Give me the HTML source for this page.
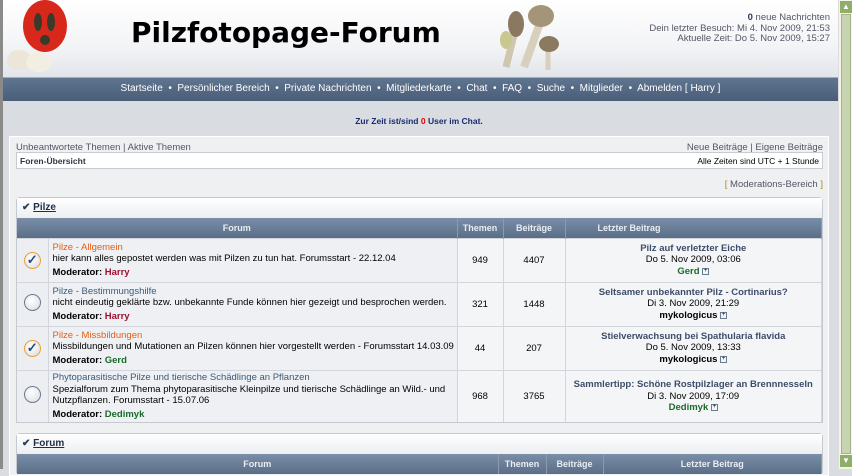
<!DOCTYPE html>
<html><head><meta charset="utf-8"><style>
*{box-sizing:border-box;margin:0;padding:0}
body{width:852px;height:469px;overflow:hidden;background:#d9dde2;font-family:"Liberation Sans",Arial,sans-serif;font-size:9.5px;color:#000;position:relative}
.lb{position:absolute;left:0;top:0;width:3px;height:469px;background:#8a8a88}
.sb{position:absolute;left:838px;top:0;width:14px;height:469px;background:#f4f2ea;border-left:1px solid #ddd}
.sb .th{position:absolute;left:2px;top:14px;width:10px;height:440px;background:#c7d4b0;border:1px solid #a5b38a}
.sb .a{position:absolute;left:1px;width:12px;height:12px;background:#8fae68;color:#fff;font-size:8px;text-align:center;line-height:12px}
.hdr{position:absolute;left:3px;top:0;width:835px;height:77px;background:linear-gradient(#fff,#f3f4f6 60%,#e2e5ea)}
.title{position:absolute;left:128px;top:16px;font-family:"DejaVu Sans",sans-serif;font-weight:bold;font-size:28px}
.hr{position:absolute;right:8px;top:13px;text-align:right;color:#556;font-size:9.5px;line-height:10.5px}
.nav{position:absolute;left:3px;top:77px;width:835px;height:24px;background:linear-gradient(#5f7590,#4a5e78);color:#fff;text-align:center;line-height:22px;font-size:10px;border-top:1px solid #aab}
.chat{position:absolute;left:0;width:838px;top:116px;text-align:center;font-weight:bold;color:#1a2a70;font-size:8.5px}
.box{position:absolute;left:9px;top:136px;width:820px;height:340px;background:#eef0f2;border:1px solid #fff}
.lnk{color:#556;font-size:9.5px}
.crumb{position:absolute;left:16px;top:152px;width:807px;height:17px;background:#fff;border:1px solid #c8ccd2;font-size:8.5px;line-height:16px;padding:0 3px}
.tb{position:absolute;left:16px;width:807px;border:1px solid #c5cad2;background:#f4f5f7;border-radius:4px 4px 0 0}
.tt{height:20px;line-height:20px;padding-left:5px;font-weight:bold;font-size:10px;background:linear-gradient(#fff,#eceef1)}
.tt u{color:#1c2e4a}
table{border-collapse:collapse;width:100%;table-layout:fixed}
th{height:20px;background:linear-gradient(#7b8ea8,#5a6e88);color:#e8edf3;font-size:9px;border-right:1px solid #8a9ab0}
td{border-top:1px solid #d2d6dc;border-right:1px solid #d2d6dc;font-size:9.5px;vertical-align:middle}
.c{text-align:center}
.ic{text-align:center;background:#eceef1}
.fn{padding-left:4px;line-height:11.5px;background:#eef0f3}
.or{color:#e85d10}.bl{color:#3a5a7a}
.mod{font-weight:bold;margin-top:2px}
.red{color:#a01030}.grn{color:#1a6a2a}
.last{line-height:11.5px;text-align:center;white-space:nowrap;font-size:9.5px}
.last b.t{color:#3d4d6a}
.circ{display:inline-block;width:17px;height:17px;border-radius:50%;border:1.5px solid #6b7a90;background:radial-gradient(circle at 40% 35%,#fff,#d8dce2)}
.circ.on{border-color:#f0a030;color:#2a4a80;font-size:13px;line-height:14px;font-weight:bold}
.pi{display:inline-block;width:7px;height:7px;border:1px solid #6a7a90;font-size:6px;line-height:5px;vertical-align:middle}
</style></head><body>
<div class="lb"></div>
<div class="hdr">
 <svg style="position:absolute;left:2px;top:0" width="80" height="75"><ellipse cx="40" cy="26" rx="22" ry="26" fill="#d8281c"/><ellipse cx="33" cy="22" rx="4" ry="9" fill="#3a3a2a"/><ellipse cx="46" cy="22" rx="4" ry="9" fill="#3a3a2a"/><ellipse cx="40" cy="40" rx="5" ry="5" fill="#3a3a2a"/><ellipse cx="14" cy="60" rx="12" ry="10" fill="#ece6d8"/><ellipse cx="34" cy="62" rx="13" ry="10" fill="#f2eee2"/></svg>
 <div class="title">Pilzfotopage-Forum</div>
 <svg style="position:absolute;left:483px;top:2px" width="75" height="72"><path d="M30 25 L20 65" stroke="#cfc6b0" stroke-width="7"/><path d="M55 18 L38 65" stroke="#d8d0bc" stroke-width="8"/><path d="M62 45 L62 68" stroke="#d8d0bc" stroke-width="5"/><ellipse cx="30" cy="22" rx="8" ry="13" fill="#8a7860"/><ellipse cx="55" cy="14" rx="13" ry="11" fill="#a49478"/><ellipse cx="63" cy="42" rx="10" ry="8" fill="#8a7a60"/><ellipse cx="20" cy="38" rx="6" ry="9" fill="#c8c890"/></svg>
 <div class="hr"><b style="color:#2a3a60">0</b> neue Nachrichten<br>Dein letzter Besuch: Mi 4. Nov 2009, 21:53<br>Aktuelle Zeit: Do 5. Nov 2009, 15:27</div>
</div>
<div class="nav">Startseite &nbsp;•&nbsp; Persönlicher Bereich &nbsp;•&nbsp; Private Nachrichten &nbsp;•&nbsp; Mitgliederkarte &nbsp;•&nbsp; Chat &nbsp;•&nbsp; FAQ &nbsp;•&nbsp; Suche &nbsp;•&nbsp; Mitglieder &nbsp;•&nbsp; Abmelden [ Harry ]</div>
<div class="chat">Zur Zeit ist/sind <span style="color:#e00">0</span> User im Chat.</div>
<div class="box"></div>
<div class="lnk" style="position:absolute;left:16px;top:142px">Unbeantwortete Themen | Aktive Themen</div>
<div class="lnk" style="position:absolute;right:29px;top:142px">Neue Beiträge | Eigene Beiträge</div>
<div class="crumb"><b style="color:#334">Foren-Übersicht</b><span style="float:right">Alle Zeiten sind UTC + 1 Stunde</span></div>
<div class="lnk" style="position:absolute;right:29px;top:179px"><span style="color:#b08a20">[</span> Moderations-Bereich <span style="color:#b08a20">]</span></div>

<div class="tb" style="top:197px">
 <div class="tt"><span style="color:#2a4060">✔</span> <u>Pilze</u></div>
 <table>
 <colgroup><col style="width:31px"><col style="width:409px"><col style="width:46px"><col style="width:62px"><col></colgroup>
 <tr><th colspan="2">Forum</th><th>Themen</th><th>Beiträge</th><th style="text-align:left;padding-left:32px">Letzter Beitrag</th></tr>
 <tr style="height:44px"><td class="ic"><span class="circ on">✓</span></td><td class="fn"><span class="or">Pilze - Allgemein</span><br>hier kann alles gepostet werden was mit Pilzen zu tun hat. Forumsstart - 22.12.04<div class="mod">Moderator: <span class="red">Harry</span></div></td><td class="c">949</td><td class="c">4407</td><td class="last"><b class="t">Pilz auf verletzter Eiche</b><br>Do 5. Nov 2009, 03:06<br><b class="grn">Gerd</b> <span class="pi">+</span></td></tr>
 <tr style="height:44px"><td class="ic"><span class="circ"></span></td><td class="fn"><span class="bl">Pilze - Bestimmungshilfe</span><br>nicht eindeutig geklärte bzw. unbekannte Funde können hier gezeigt und besprochen werden.<div class="mod">Moderator: <span class="red">Harry</span></div></td><td class="c">321</td><td class="c">1448</td><td class="last"><b class="t">Seltsamer unbekannter Pilz - Cortinarius?</b><br>Di 3. Nov 2009, 21:29<br><b>mykologicus</b> <span class="pi">+</span></td></tr>
 <tr style="height:44px"><td class="ic"><span class="circ on">✓</span></td><td class="fn"><span class="or">Pilze - Missbildungen</span><br>Missbildungen und Mutationen an Pilzen können hier vorgestellt werden - Forumsstart 14.03.09<div class="mod">Moderator: <span class="grn">Gerd</span></div></td><td class="c">44</td><td class="c">207</td><td class="last"><b class="t">Stielverwachsung bei Spathularia flavida</b><br>Do 5. Nov 2009, 13:33<br><b>mykologicus</b> <span class="pi">+</span></td></tr>
 <tr style="height:52px"><td class="ic"><span class="circ"></span></td><td class="fn"><span class="bl">Phytoparasitische Pilze und tierische Schädlinge an Pflanzen</span><br>Spezialforum zum Thema phytoparasitische Kleinpilze und tierische Schädlinge an Wild.- und Nutzpflanzen. Forumsstart - 15.07.06<div class="mod">Moderator: <span class="grn">Dedimyk</span></div></td><td class="c">968</td><td class="c">3765</td><td class="last"><b class="t">Sammlertipp: Schöne Rostpilzlager an Brennnesseln</b><br>Di 3. Nov 2009, 17:09<br><b class="grn">Dedimyk</b> <span class="pi">+</span></td></tr>
 </table>
</div>

<div class="tb" style="top:433px;height:40px">
 <div class="tt"><span style="color:#2a4060">✔</span> <u>Forum</u></div>
 <table>
 <colgroup><col style="width:481px"><col style="width:48px"><col style="width:57px"><col></colgroup>
 <tr><th>Forum</th><th>Themen</th><th>Beiträge</th><th>Letzter Beitrag</th></tr>
 </table>
</div>

<div class="sb"><div class="a" style="top:1px">▲</div><div class="th"></div><div class="a" style="top:455px">▼</div></div>
</body></html>
